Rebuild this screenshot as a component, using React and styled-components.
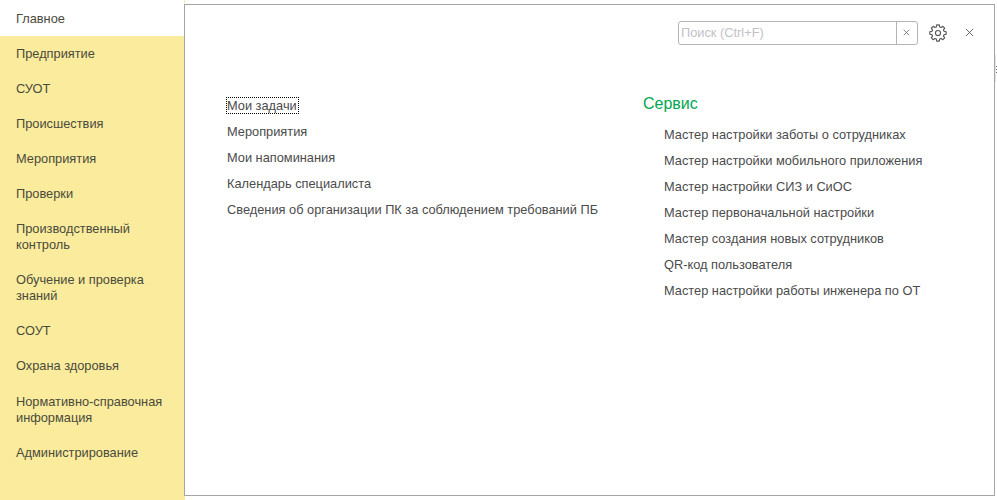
import React from 'react'
import styled, { createGlobalStyle } from 'styled-components'

const GlobalStyle = createGlobalStyle`
html, body {
  margin: 0;
  padding: 0;
  background: #fff;
}
body {
  font-family: "Liberation Sans", Arial, sans-serif;
  font-size: 12.8px;
  color: #4b4b4b;
}
`

const Page = styled.div`
width: 997px;
height: 500px;
display: flex;
overflow: hidden;
background: #fff;
`

const Sidebar = styled.nav`
width: 185px;
flex-shrink: 0;
background: #fbec9d;
display: flex;
flex-direction: column;
`

const MenuItem = styled.div`
width: 184px;
box-sizing: border-box;
padding: ${props => props.roomy ? '11px' : '10px'} 16px 9px;
line-height: 16px;
color: #4a4a3c;
background: ${props => props.active ? '#fff' : 'transparent'};
`

const Panel = styled.main`
flex: 1;
margin: 4px 0 4px -1px;
border: 1px solid #a5a5a5;
background: #fff;
display: flex;
flex-direction: column;
`

const Gutter = styled.div`
width: 2px;
flex-shrink: 0;
padding-top: 55px;
`

const Grip = styled.div`
height: 27px;
width: 2px;
box-sizing: border-box;
border-left: 1px solid #e4e4e4;
background: repeating-linear-gradient(#fff 0 2px, #777 2px 3px);
background-size: 100% 9px;
background-repeat: no-repeat;
background-position: 0 9px;
`

const TopBar = styled.div`
display: flex;
justify-content: flex-end;
align-items: center;
height: 23px;
margin-top: 16px;
padding-right: 20px;
`

const Search = styled.div`
width: 238px;
height: 22px;
border: 1px solid #b4b4b4;
border-radius: 3px;
display: flex;
margin-right: 11px;
`

const SearchText = styled.div`
flex: 1;
padding-left: 2px;
line-height: 22px;
color: #c4c0c8;
`

const SearchClear = styled.div`
width: 19px;
padding-right: 1px;
border-left: 1px solid #b4b4b4;
display: flex;
align-items: center;
justify-content: center;
`

const IconButton = styled.div`
display: flex;
align-items: center;
justify-content: center;
margin-left: ${props => props.gap || 0}px;
`

const Columns = styled.div`
display: flex;
padding: 49px 0 0 42px;
`

const LeftColumn = styled.div`
width: 416px;
display: flex;
flex-direction: column;
`

const RightColumn = styled.div`
display: flex;
flex-direction: column;
`

const Link = styled.div`
height: 26px;
line-height: 26px;
color: #4b4b4b;
white-space: nowrap;
`

const FocusText = styled.span`
outline: 1px dotted #000;
outline-offset: 0;
padding: 0 1px 0 0;
`

const GroupTitle = styled.div`
color: #00a651;
font-size: 16px;
line-height: 18px;
margin: 2px 0 9px;
`

const GroupLinks = styled.div`
padding-left: 21px;
display: flex;
flex-direction: column;
`

const Cross = ({ size }) => (
  <svg width={size} height={size} viewBox="0 0 10 10" fill="none" stroke="#555" strokeWidth="1">
    <path d="M1 1 L9 9 M9 1 L1 9" />
  </svg>
)

const Gear = () => (
  <svg width="18" height="18" viewBox="0 0 24 24" fill="none" stroke="#555" strokeWidth="1.5" strokeLinejoin="round">
    <path d="M10.3 2h3.4l.5 2.8 1.9.8 2.4-1.6 2.4 2.4-1.6 2.4.8 1.9 2.8.5v3.4l-2.8.5-.8 1.9 1.6 2.4-2.4 2.4-2.4-1.6-1.9.8-.5 2.8h-3.4l-.5-2.8-1.9-.8-2.4 1.6-2.4-2.4 1.6-2.4-.8-1.9-2.8-.5v-3.4l2.8-.5.8-1.9-1.6-2.4 2.4-2.4 2.4 1.6 1.9-.8z" transform="translate(0 -0.9)" />
    <circle cx="12" cy="12" r="3.4" />
  </svg>
)

const menu = [
  { title: 'Главное', active: true, roomy: true },
  { title: 'Предприятие' },
  { title: 'СУОТ' },
  { title: 'Происшествия' },
  { title: 'Мероприятия' },
  { title: 'Проверки' },
  { title: 'Производственный контроль' },
  { title: 'Обучение и проверка знаний' },
  { title: 'СОУТ' },
  { title: 'Охрана здоровья' },
  { title: 'Нормативно-справочная информация', roomy: true },
  { title: 'Администрирование' },
]

const tasks = [
  'Мероприятия',
  'Мои напоминания',
  'Календарь специалиста',
  'Сведения об организации ПК за соблюдением требований ПБ',
]

const service = [
  'Мастер настройки заботы о сотрудниках',
  'Мастер настройки мобильного приложения',
  'Мастер настройки СИЗ и СиОС',
  'Мастер первоначальной настройки',
  'Мастер создания новых сотрудников',
  'QR-код пользователя',
  'Мастер настройки работы инженера по ОТ',
]

const App = () => (
  <Page>
    <GlobalStyle />
    <Sidebar>
      {menu.map(item => (
        <MenuItem key={item.title} active={item.active} roomy={item.roomy}>{item.title}</MenuItem>
      ))}
    </Sidebar>
    <Panel>
      <TopBar>
        <Search>
          <SearchText>Поиск (Ctrl+F)</SearchText>
          <SearchClear><Cross size={7} /></SearchClear>
        </Search>
        <IconButton><Gear /></IconButton>
        <IconButton gap={18}><Cross size={9} /></IconButton>
      </TopBar>
      <Columns>
        <LeftColumn>
          <Link><FocusText>Мои задачи</FocusText></Link>
          {tasks.map(item => <Link key={item}>{item}</Link>)}
        </LeftColumn>
        <RightColumn>
          <GroupTitle>Сервис</GroupTitle>
          <GroupLinks>
            {service.map(item => <Link key={item}>{item}</Link>)}
          </GroupLinks>
        </RightColumn>
      </Columns>
    </Panel>
    <Gutter><Grip /></Gutter>
  </Page>
)

export default App
